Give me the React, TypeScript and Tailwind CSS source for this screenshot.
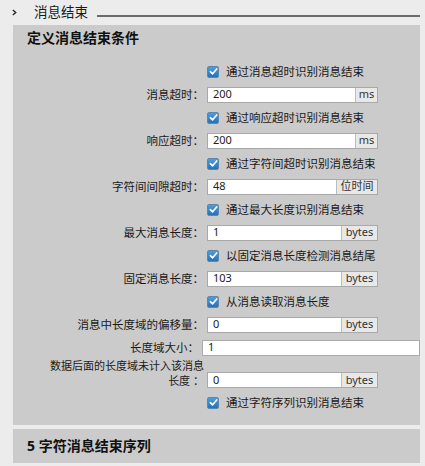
import React from 'react';

const font = '"Noto Sans", "Noto Sans CJK SC", sans-serif';

function Check({ label }: { label: string }) {
  return (
    <div className="flex h-[23px] items-center pl-[194px]">
      <span className="flex h-[12px] w-[12px] items-center justify-center rounded-[2px] border border-[#5d86ad] bg-gradient-to-b from-[#4d9ddc] to-[#2473b8]">
        <svg viewBox="0 0 10 10" className="h-[9px] w-[9px]">
          <path d="M1.5 5.2 L4 7.6 L8.6 2.2" fill="none" stroke="#fff" strokeWidth="1.8" strokeLinecap="round" strokeLinejoin="round" />
        </svg>
      </span>
      <span className="ml-[7px] text-[11.5px] leading-none text-[#1a1a1a]">{label}</span>
    </div>
  );
}

function Field({
  label,
  value,
  unit,
  unitW,
  wide,
}: {
  label: React.ReactNode;
  value: string;
  unit?: string;
  unitW?: string;
  wide?: boolean;
}) {
  return (
    <div className="flex h-[23px] items-center">
      <div className="w-[191px] text-right text-[11.5px] leading-[14px] text-[#1a1a1a]">{label}</div>
      <div
        className={`ml-[3px] flex h-[16px] shrink-0 items-stretch border border-[#a9a9a9] bg-white ${
          wide ? 'w-[218px]' : 'w-[171px]'
        }`}
      >
        <span className="flex flex-1 items-center pl-[5px] text-[11px] text-[#222]">{value}</span>
        {unit && (
          <span
            className={`flex items-center justify-center border-l border-[#bdbdbd] bg-[#e8e8e8] text-[11px] text-[#333] ${unitW}`}
          >
            {unit}
          </span>
        )}
      </div>
    </div>
  );
}

export default function App() {
  return (
    <div className="h-[466px] w-[425px] overflow-hidden bg-[#ececec]" style={{ fontFamily: font }}>
      <div className="flex h-[25px] items-center pl-[12px] pr-[5px]">
        <svg viewBox="0 0 6 8" className="h-[7px] w-[5px]">
          <path d="M1 1 L4.5 4 L1 7" fill="none" stroke="#222" strokeWidth="1.6" />
        </svg>
        <span className="ml-[17px] text-[13.5px] leading-none text-[#1a1a1a]">消息结束</span>
        <div className="ml-[9px] mt-[6px] h-[2px] flex-1 bg-[#6b6b6b]" />
      </div>

      <div className="ml-[13px] w-[407px] bg-[#cbcbcb] pb-[11px] pt-[5px]">
        <div className="pl-[14px] text-[14px] font-bold leading-[16px] text-[#111]">定义消息结束条件</div>
        <div className="mt-[14px]">
          <Check label="通过消息超时识别消息结束" />
          <Field label="消息超时：" value="200" unit="ms" unitW="w-[22px]" />
          <Check label="通过响应超时识别消息结束" />
          <Field label="响应超时：" value="200" unit="ms" unitW="w-[22px]" />
          <Check label="通过字符间超时识别消息结束" />
          <Field label="字符间间隙超时：" value="48" unit="位时间" unitW="w-[41px]" />
          <Check label="通过最大长度识别消息结束" />
          <Field label="最大消息长度：" value="1" unit="bytes" unitW="w-[36px]" />
          <Check label="以固定消息长度检测消息结尾" />
          <Field label="固定消息长度：" value="103" unit="bytes" unitW="w-[36px]" />
          <Check label="从消息读取消息长度" />
          <Field label="消息中长度域的偏移量：" value="0" unit="bytes" unitW="w-[36px]" />
          <Field label="长度域大小：" value="1" wide />
          <div className="flex h-[32px] items-end pb-[3px]">
            <div className="w-[191px] text-right text-[11px] leading-[15px] text-[#1a1a1a]">
              数据后面的长度域未计入该消息
              <br />
              长度 ：
            </div>
            <div className="ml-[3px] flex h-[16px] w-[171px] shrink-0 items-stretch border border-[#a9a9a9] bg-white">
              <span className="flex flex-1 items-center pl-[5px] text-[11px] text-[#222]">0</span>
              <span className="flex w-[36px] items-center justify-center border-l border-[#bdbdbd] bg-[#e8e8e8] text-[11px] text-[#333]">
                bytes
              </span>
            </div>
          </div>
          <Check label="通过字符序列识别消息结束" />
        </div>
      </div>

      <div className="ml-[13px] mt-[4px] h-[34px] w-[407px] bg-[#cbcbcb] pl-[14px] pt-[9px]">
        <div className="text-[14px] font-bold leading-[16px] text-[#111]">5 字符消息结束序列</div>
      </div>
    </div>
  );
}
